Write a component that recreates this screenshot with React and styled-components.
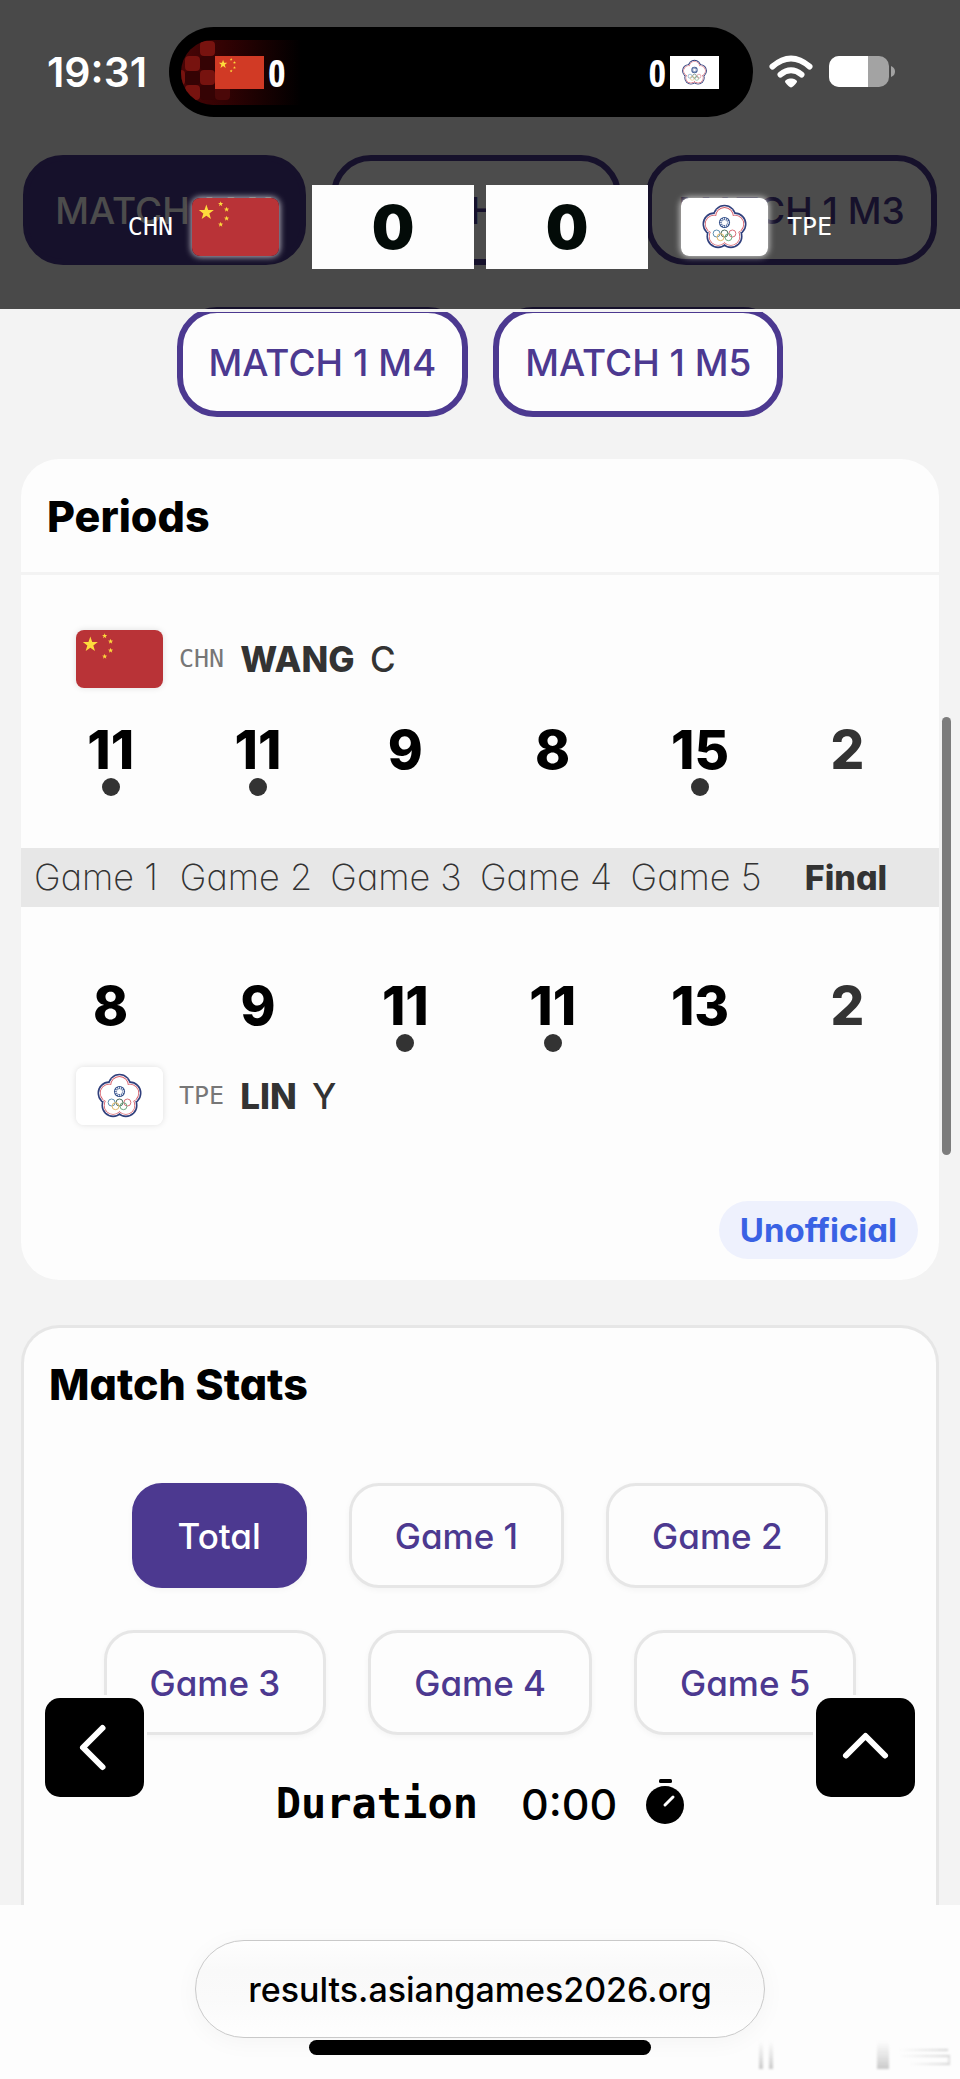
import { useState } from "react";
import styled, { createGlobalStyle } from "styled-components";

const matches = [
  "MATCH 1 M1",
  "MATCH 1 M2",
  "MATCH 1 M3",
  "MATCH 1 M4",
  "MATCH 1 M5",
];
const tabs = ["Total", "Game 1", "Game 2", "Game 3", "Game 4", "Game 5"];
const games = ["Game 1", "Game 2", "Game 3", "Game 4", "Game 5"];
const home = {
  code: "CHN",
  last: "WANG",
  first: "C",
  scores: [11, 11, 9, 8, 15],
  won: [true, true, false, false, true],
  final: 2,
};
const away = {
  code: "TPE",
  last: "LIN",
  first: "Y",
  scores: [8, 9, 11, 11, 13],
  won: [false, false, true, true, false],
  final: 2,
};

const starPoints = (cx, cy, r) =>
  Array.from({ length: 10 }, (_, i) => {
    const a = (Math.PI / 5) * i - Math.PI / 2;
    const d = i % 2 ? r * 0.4 : r;
    return `${cx + d * Math.cos(a)},${cy + d * Math.sin(a)}`;
  }).join(" ");

const petals = Array.from({ length: 5 }, (_, i) => {
  const a = ((Math.PI * 2) / 5) * i - Math.PI / 2;
  return [44 + 11 * Math.cos(a), 29.5 + 11 * Math.sin(a)];
});

const Blossom = ({ r, fill }) => (
  <g fill={fill}>
    <circle cx="44" cy="29.5" r="12" />
    {petals.map(([x, y], i) => (
      <circle key={i} cx={x} cy={y} r={r} />
    ))}
  </g>
);

const Flag = ({ code, red = "#b93337" }) =>
  code === "CHN" ? (
    <svg viewBox="0 0 88 58" preserveAspectRatio="none" role="img" aria-label="China">
      <rect width="88" height="58" fill={red} />
      <g fill="#fddc3c">
        <polygon points={starPoints(14.5, 14.5, 8)} />
        <polygon points={starPoints(29, 6, 2.8)} />
        <polygon points={starPoints(35, 11.5, 2.8)} />
        <polygon points={starPoints(35, 20.5, 2.8)} />
        <polygon points={starPoints(29, 26.5, 2.8)} />
      </g>
    </svg>
  ) : (
    <svg viewBox="0 0 88 58" preserveAspectRatio="none" role="img" aria-label="Chinese Taipei">
      <rect width="88" height="58" fill="#fff" />
      <Blossom r={11.8} fill="#303f7c" />
      <Blossom r={10.2} fill="#fff" />
      <Blossom r={9.4} fill="#d65a66" />
      <Blossom r={8.6} fill="#fff" />
      <circle cx="44" cy="24.5" r="5.6" fill="#34518c" />
      <circle cx="44" cy="24.5" r="3.7" fill="none" stroke="#fff" strokeWidth="1.6" strokeDasharray="1.2 0.74" />
      <circle cx="44" cy="24.5" r="2.6" fill="#fff" />
      <g fill="none" strokeWidth="0.9">
        <circle cx="36" cy="35.5" r="3.5" stroke="#4c83a8" />
        <circle cx="44" cy="35.5" r="3.5" stroke="#3c5e4c" />
        <circle cx="52" cy="35.5" r="3.5" stroke="#d4606a" />
        <circle cx="40" cy="39.2" r="3.5" stroke="#e0b35c" />
        <circle cx="48" cy="39.2" r="3.5" stroke="#5fa173" />
      </g>
    </svg>
  );

const RedPattern = () => (
  <svg width="120" height="65" viewBox="0 0 120 65" aria-hidden="true">
    <defs>
      <linearGradient id="glow">
        <stop offset="0" stopColor="#4a0506" />
        <stop offset="0.35" stopColor="#320203" />
        <stop offset="1" stopColor="#000" />
      </linearGradient>
      <clipPath id="pill">
        <path d="M32 0H120V65H32A32 32.500 0 0 1 32 0Z" />
      </clipPath>
    </defs>
    <g clipPath="url(#pill)">
      <rect width="120" height="65" fill="url(#glow)" />
      <g fill="#77130f">
        <rect x="19" y="1" width="15" height="15" rx="4" />
        <rect x="4" y="16" width="15" height="15" rx="4" />
        <rect x="19" y="30" width="15" height="15" rx="4" />
        <rect x="-11" y="30" width="15" height="15" rx="4" />
        <rect x="4" y="45" width="15" height="15" rx="4" />
      </g>
      <rect x="34" y="45" width="15" height="15" rx="4" fill="#4b0808" />
      <g fill="#350304">
        <rect x="19" y="16" width="15" height="14" rx="4" />
        <rect x="4" y="31" width="15" height="14" rx="4" />
        <rect x="19" y="45" width="15" height="15" rx="4" />
      </g>
    </g>
  </svg>
);

const Scores = ({ player, lower }) => (
  <ScoreRow $lower={lower}>
    {player.scores.map((s, i) => (
      <ScoreCell key={i}>
        {s}
        {player.won[i] && <Dot />}
      </ScoreCell>
    ))}
    <ScoreCell $final>{player.final}</ScoreCell>
  </ScoreRow>
);

const Player = ({ player }) => (
  <PlayerRow>
    <PlayerCell colSpan={6}>
      <FlagBox>
        <Flag code={player.code} />
      </FlagBox>
      <Code>{player.code}</Code>
      <Name>
        <strong>{player.last}</strong> {player.first}
      </Name>
    </PlayerCell>
  </PlayerRow>
);

export default function App() {
  const [match, setMatch] = useState("MATCH 1 M1");
  const [tab, setTab] = useState("Total");
  return (
    <Page>
      <GlobalStyle />
      <Header>
        <StatusBar>
          <Time>19:31</Time>
          <Island>
            <IslandArt>
              <RedPattern />
            </IslandArt>
            <IslandTeam>
              <MiniFlag>
                <Flag code="CHN" red="#d13a25" />
              </MiniFlag>
              0
            </IslandTeam>
            <IslandTeam>
              0
              <MiniFlag>
                <Flag code="TPE" />
              </MiniFlag>
            </IslandTeam>
          </Island>
          <svg width="44" height="34" viewBox="0 0 44 34" role="img" aria-label="Wi-Fi">
            <g fill="none" stroke="#fff" strokeWidth="6" strokeLinecap="round">
              <path d="M3.500 11.500Q22 -4.500 40.500 11.500" />
              <path d="M11.500 19.500Q22 11 32.500 19.500" />
            </g>
            <path d="M22 23.500c3 0 6 1.500 6 3 0 1.500-4.500 6-6 6s-6-4.500-6-6c0-1.500 3-3 6-3z" fill="#fff" />
          </svg>
          <svg width="67" height="32" viewBox="0 0 67 32" role="img" aria-label="Battery">
            <clipPath id="cell">
              <rect width="60" height="31" rx="10" />
            </clipPath>
            <g clipPath="url(#cell)">
              <rect width="60" height="31" fill="#a3a3a3" />
              <rect width="39" height="31" fill="#fff" />
            </g>
            <path d="M62 10q4 1.500 4 5.500t-4 5.500z" fill="#a3a3a3" />
          </svg>
        </StatusBar>
        <ScoreBoard>
          <Code $light>CHN</Code>
          <FlagBox $glow>
            <Flag code="CHN" />
          </FlagBox>
          <BigScores>
            <BigScore>0</BigScore>
            <BigScore>0</BigScore>
          </BigScores>
          <FlagBox $glow>
            <Flag code="TPE" />
          </FlagBox>
          <Code $light>TPE</Code>
        </ScoreBoard>
      </Header>

      <MatchList>
        {matches.map((m) => (
          <MatchButton key={m} $active={m === match} onClick={() => setMatch(m)}>
            {m}
          </MatchButton>
        ))}
      </MatchList>

      <PeriodsCard>
        <CardHead>
          <Title>Periods</Title>
        </CardHead>
        <Table>
          <tbody>
            <Player player={home} />
            <Scores player={home} />
            <BandRow>
              {games.map((g) => (
                <BandCell key={g}>{g}</BandCell>
              ))}
              <BandCell $final>Final</BandCell>
            </BandRow>
            <Scores player={away} lower />
            <Player player={away} />
          </tbody>
        </Table>
        <Badge>Unofficial</Badge>
      </PeriodsCard>

      <StatsCard>
        <Title>Match Stats</Title>
        <TabList>
          {tabs.map((t) => (
            <TabButton key={t} $active={t === tab} onClick={() => setTab(t)}>
              {t}
            </TabButton>
          ))}
        </TabList>
        <Duration>
          <DurationLabel>Duration</DurationLabel>
          <span>0:00</span>
          <svg width="38" height="46" viewBox="0 0 38 46" aria-hidden="true">
            <rect x="13" y="0" width="13" height="4" rx="1.500" />
            <circle cx="19" cy="26" r="19" />
            <path d="M19 26L27 18" stroke="#fff" strokeWidth="3" strokeLinecap="round" />
          </svg>
        </Duration>
      </StatsCard>

      <BottomBar>
        <AddressButton>results.asiangames2026.org</AddressButton>
        <HomeIndicator />
        <Smudge>
          <svg width="200" height="34" viewBox="0 0 200 34" aria-hidden="true">
            <defs>
              <linearGradient id="fade" x2="0" y2="1">
                <stop offset="0" stopColor="#ccc" stopOpacity="0" />
                <stop offset="1" stopColor="#bbb" stopOpacity="0.8" />
              </linearGradient>
              <linearGradient id="streak">
                <stop offset="0" stopColor="#ddd" stopOpacity="0" />
                <stop offset="1" stopColor="#d4d4d4" />
              </linearGradient>
            </defs>
            <rect x="1" y="0" width="4" height="28" fill="url(#fade)" />
            <rect x="11" y="0" width="4" height="28" fill="url(#fade)" />
            <rect x="119" y="0" width="12" height="28" fill="url(#fade)" />
            <g fill="url(#streak)">
              <rect x="140" y="8" width="50" height="2" />
              <rect x="140" y="14" width="52" height="2" />
              <rect x="150" y="22" width="42" height="2" />
              <rect x="189" y="15" width="3" height="8" rx="1" />
            </g>
          </svg>
        </Smudge>
      </BottomBar>

      <BackButton aria-label="Back">
        <svg width="99" height="99" viewBox="0 0 99 99" aria-hidden="true">
          <path d="M57.500 30L38 49.500L57.500 69" />
        </svg>
      </BackButton>
      <TopButton aria-label="Back to top">
        <svg width="99" height="99" viewBox="0 0 99 99" aria-hidden="true">
          <path d="M30 57.500L49.500 38L69 57.500" />
        </svg>
      </TopButton>
      <ScrollThumb />
    </Page>
  );
}

const GlobalStyle = createGlobalStyle`
  * {
    box-sizing: border-box;
  }
  body {
    margin: 0;
    background-color: #f3f3f3;
    font-family: Inter, "Liberation Sans", sans-serif;
    font-feature-settings: "cv11";
  }
  button {
    font: inherit;
    font-feature-settings: inherit;
    cursor: pointer;
  }
  svg {
    display: block;
    flex-shrink: 0;
  }
`;

const Page = styled.div`
  position: relative;
  display: flex;
  flex-direction: column;
  min-height: 100vh;
  padding-top: 155px;
`;

const Header = styled.header`
  position: absolute;
  top: 0;
  left: 0;
  right: 0;
  z-index: 2;
  padding-bottom: 40px;
  background-color: rgba(0, 0, 0, 0.7);
  background-clip: padding-box;
  border-bottom: 3px solid #f3f3f3;
`;

const StatusBar = styled.div`
  display: flex;
  align-items: center;
  gap: 16px;
  padding: 27px 64px 0 47px;
`;

const Time = styled.div`
  width: 106px;
  color: #fff;
  font-size: 41px;
  font-weight: 600;
  line-height: 50px;
`;

const Island = styled.div`
  position: relative;
  flex: 1;
  display: flex;
  align-items: center;
  justify-content: space-between;
  height: 90px;
  padding: 0 34px 0 46px;
  border-radius: 45px;
  background-color: #000;
`;

const IslandArt = styled.div`
  position: absolute;
  top: 13px;
  left: 12px;
`;

const IslandTeam = styled.div`
  position: relative;
  display: flex;
  align-items: center;
  gap: 4px;
  color: #fff;
  font-family: "Open Sans Condensed", "Roboto Condensed", "DejaVu Sans Condensed", sans-serif;
  font-size: 38px;
`;

const MiniFlag = styled.div`
  width: 49px;
  height: 33px;
  svg {
    width: 100%;
    height: 100%;
  }
`;

const ScoreBoard = styled.div`
  display: flex;
  align-items: center;
  justify-content: center;
  gap: 19px;
  margin-top: 68px;
`;

const FlagBox = styled.div`
  width: 87px;
  height: 58px;
  border-radius: 8px;
  overflow: hidden;
  box-shadow: ${({ $glow }) =>
    $glow ? "0 0 6px 1px rgba(255, 255, 255, 0.7)" : "0 0 6px rgba(0, 0, 0, 0.12)"};
  svg {
    width: 100%;
    height: 100%;
  }
`;

const Code = styled.span`
  color: ${({ $light }) => ($light ? "#fff" : "#777")};
  font-family: "DejaVu Sans Mono", monospace;
  font-size: 25px;
  line-height: 30px;
`;

const BigScores = styled.div`
  display: flex;
  gap: 12px;
  padding: 0 14px;
`;

const BigScore = styled.div`
  width: 162px;
  background-color: #fdfdfd;
  color: #030b08;
  font-size: 60px;
  font-weight: 900;
  line-height: 84px;
  text-align: center;
`;

const MatchList = styled.nav`
  display: flex;
  flex-wrap: wrap;
  justify-content: center;
  gap: 42px 25px;
`;

const MatchButton = styled.button`
  height: 110px;
  padding: 0 26px;
  border: 6px solid #4c3990;
  border-radius: 40px;
  background-color: ${({ $active }) => ($active ? "#4c3990" : "#fdfdfd")};
  color: ${({ $active }) => ($active ? "#fff" : "#4c3990")};
  font-size: 37px;
  font-weight: 500;
`;

const PeriodsCard = styled.section`
  display: flex;
  flex-direction: column;
  margin: 42px 21px 0;
  padding-bottom: 21px;
  border-radius: 38px;
  background-color: #fdfdfd;
`;

const CardHead = styled.div`
  padding: 32px 26px 31px;
  border-bottom: 3px solid #f3f3f3;
`;

const Title = styled.h2`
  margin: 0;
  color: #000;
  font-size: 43px;
  font-weight: 800;
  line-height: 50px;
`;

const Table = styled.table`
  display: block;
  padding: 55px 0 76px;
  tbody {
    display: block;
  }
`;

const PlayerRow = styled.tr`
  display: block;
`;

const PlayerCell = styled.td`
  display: flex;
  align-items: center;
  gap: 16px;
  padding: 0 55px;
`;

const Name = styled.span`
  color: #333;
  font-size: 35px;
  font-weight: 500;
  line-height: 42px;
  strong {
    margin-right: 6px;
    font-weight: 800;
  }
`;

const ScoreRow = styled.tr`
  display: grid;
  grid-template-columns: repeat(6, 1fr);
  height: 160px;
  padding: ${({ $lower }) => ($lower ? "72px" : "35px")} 18px 0 16px;
`;

const ScoreCell = styled.td`
  display: flex;
  flex-direction: column;
  align-items: center;
  padding: 0;
  color: ${({ $final }) => ($final ? "#333" : "#000")};
  font-size: 53px;
  font-weight: 800;
  line-height: 55px;
`;

const Dot = styled.i`
  width: 18px;
  height: 18px;
  border-radius: 50%;
  background-color: #333;
`;

const BandRow = styled.tr`
  display: grid;
  grid-template-columns: repeat(6, 1fr);
  padding-right: 18px;
  background-color: #e7e7e7;
`;

const BandCell = styled.th`
  padding: 0;
  color: #333;
  font-size: ${({ $final }) => ($final ? "34px" : "36px")};
  font-weight: ${({ $final }) => ($final ? 800 : 200)};
  line-height: 59px;
  white-space: nowrap;
`;

const Badge = styled.span`
  align-self: flex-end;
  margin-right: 21px;
  padding: 0 21px;
  border-radius: 29px;
  background-color: #eef1fd;
  color: #3a62e4;
  font-size: 33px;
  font-weight: 700;
  line-height: 58px;
`;

const StatsCard = styled.section`
  flex: 1;
  margin: 45px 21px 0;
  padding: 31px 25px 0;
  border: 3px solid #e6e6e6;
  border-bottom: 0;
  border-radius: 38px 38px 0 0;
  background-color: #fdfdfd;
`;

const TabList = styled.div`
  display: flex;
  flex-wrap: wrap;
  justify-content: center;
  gap: 42px;
  margin-top: 74px;
`;

const TabButton = styled.button`
  height: 105px;
  padding: 0 43px;
  border: 3px solid ${({ $active }) => ($active ? "#4c3990" : "#e6e6e6")};
  border-radius: 30px;
  background-color: ${({ $active }) => ($active ? "#4c3990" : "#fdfdfd")};
  box-shadow: 0 2px 6px rgba(0, 0, 0, 0.04);
  color: ${({ $active }) => ($active ? "#fff" : "#4c3990")};
  font-size: 35px;
  font-weight: 500;
`;

const Duration = styled.div`
  display: flex;
  align-items: flex-start;
  justify-content: center;
  gap: 29px;
  margin-top: 44px;
  color: #000;
  font-size: 43px;
  font-weight: 500;
  line-height: 50px;
`;

const DurationLabel = styled.span`
  margin-right: 14px;
  font-family: "DejaVu Sans Mono", monospace;
  font-size: 42px;
  font-weight: 700;
`;

const BottomBar = styled.footer`
  position: relative;
  display: flex;
  flex-direction: column;
  align-items: center;
  gap: 2px;
  padding: 35px 0 24px;
  background-color: #fdfdfd;
`;

const AddressButton = styled.button`
  height: 98px;
  padding: 0 52px;
  border: 1px solid #c9c9c9;
  border-radius: 49px;
  background: linear-gradient(#fefefe, #f9f9f9 30%, #fafafa 60%, #fefefe);
  box-shadow: 0 4px 24px rgba(0, 0, 0, 0.04);
  color: #000;
  font-feature-settings: normal;
  font-size: 34px;
  font-weight: 500;
`;

const HomeIndicator = styled.div`
  width: 342px;
  height: 15px;
  border-radius: 8px;
  background-color: #000;
`;

const Smudge = styled.div`
  position: absolute;
  right: 2px;
  bottom: 4px;
  filter: blur(1px);
`;

const FloatButton = styled.button`
  position: absolute;
  bottom: 282px;
  z-index: 1;
  padding: 0;
  border: 0;
  border-radius: 15px;
  background-color: #000;
  box-shadow: 0 0 0 3px #fdfdfd;
  path {
    fill: none;
    stroke: #fff;
    stroke-width: 6px;
    stroke-linecap: round;
    stroke-linejoin: round;
  }
`;

const BackButton = styled(FloatButton)`
  left: 45px;
`;

const TopButton = styled(FloatButton)`
  right: 45px;
`;

const ScrollThumb = styled.div`
  position: absolute;
  top: 717px;
  right: 9px;
  width: 9px;
  height: 438px;
  border-radius: 5px;
  background-color: #7c7c7c;
`;
